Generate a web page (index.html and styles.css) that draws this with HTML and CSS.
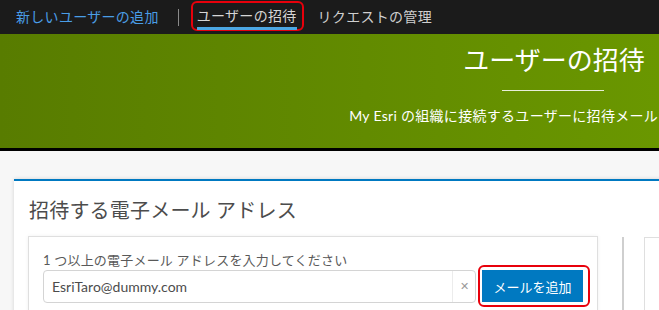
FILE: index.html
```html
<!DOCTYPE html>
<html lang="ja">
<head>
    <meta charset="UTF-8">
    <meta name="viewport" content="width=device-width, initial-scale=1.0">
    <title>ユーザーの招待</title>
    <link rel="stylesheet" href="styles.css">
</head>
<body>
    <nav class="topnav">
        <a href="#" class="nav-link nav-link-add">新しいユーザーの追加</a>
        <span class="nav-sep"></span>
        <span class="highlight highlight-nav">
            <a href="#" class="nav-link nav-link-active">ユーザーの招待</a>
        </span>
        <a href="#" class="nav-link">リクエストの管理</a>
    </nav>

    <header class="banner">
        <div class="banner-inner">
            <h1 class="banner-title">ユーザーの招待</h1>
            <div class="banner-rule"></div>
            <p class="banner-text">My Esri の組織に接続するユーザーに招待メールを送信します。</p>
        </div>
    </header>

    <main class="page">
        <section class="card">
            <h2 class="card-title">招待する電子メール アドレス</h2>

            <div class="card-body">
                <div class="email-box">
                    <label class="email-label" for="email-input">1 つ以上の電子メール アドレスを入力してください</label>
                    <div class="email-row">
                        <div class="input-wrap">
                            <input type="text" id="email-input" class="email-input" value="EsriTaro@dummy.com">
                            <span class="clear-button">&#x2715;</span>
                        </div>
                        <span class="highlight highlight-button">
                            <button class="add-button">メールを追加</button>
                        </span>
                    </div>
                </div>

                <div class="divider"></div>

                <div class="side-box"></div>
            </div>
        </section>
    </main>
</body>
</html>
```

FILE: styles.css
```css
html, body {
    margin: 0;
    overflow: hidden;
}

body {
    font-family: "Lato", "Noto Sans CJK JP", sans-serif;
    background-color: #f7f7f7;
    width: 659px;
    height: 310px;
}

/* Nawigacja */

.topnav {
    display: flex;
    align-items: center;
    height: 34px;
    padding-left: 16px;
    background-color: #1b1b1b;
    box-sizing: border-box;
}

.nav-link {
    font-size: 14px;
    letter-spacing: 0.3px;
    line-height: 20px;
    color: #cfcfcf;
    text-decoration: none;
    white-space: nowrap;
}

.nav-link-add {
    color: #4a9de6;
}

.nav-sep {
    width: 1px;
    height: 17px;
    margin: 0 12px 0 19px;
    background-color: #8a8a8a;
}

.highlight {
    display: inline-flex;
    align-items: center;
    border: 2px solid #e8000b;
    border-radius: 6px;
    box-sizing: border-box;
}

.highlight-nav {
    height: 30px;
    margin-top: -2px;
    padding: 4px 5px 0 4px;
    margin-right: 14px;
}

.nav-link-active {
    color: #d6d6d6;
    border-bottom: 3px solid #4ca7e3;
    padding-bottom: 1px;
}

/* Baner */

.banner {
    height: 117px;
    background: linear-gradient(to right, #587c00, #6a9700);
    border-bottom: 3px solid #000;
    box-sizing: border-box;
    overflow: hidden;
}

.banner-inner {
    width: 430px;
    margin-left: 338px;
    padding-top: 11px;
    text-align: center;
    color: #fff;
}

.banner-title {
    margin: 0;
    font-size: 26px;
    font-weight: normal;
    line-height: 30px;
    padding-left: 2px;
}

.banner-rule {
    width: 102px;
    height: 1px;
    margin: 15px auto 0;
    background-color: #e8eed8;
}

.banner-text {
    margin: 15px 0 0;
    font-size: 14px;
    letter-spacing: 0.3px;
    line-height: 20px;
    white-space: nowrap;
}

/* Karta */

.page {
    padding: 28px 0 0 14px;
}

.card {
    width: 720px;
    height: 200px;
    background-color: #fff;
    border-top: 2px solid #0079c1;
    box-shadow: 0px 0px 4px 0px rgba(0, 0, 0, 0.15);
    padding: 15px 0 0 14px;
    box-sizing: border-box;
}

.card-title {
    margin: 0 0 12px 1px;
    font-size: 20px;
    letter-spacing: 0.2px;
    font-weight: normal;
    line-height: 28px;
    color: #4c4c4c;
}

.card-body {
    display: flex;
    align-items: flex-start;
}

.email-box {
    width: 570px;
    height: 100px;
    border: 1px solid #dfdfdf;
    padding: 14px 0 0 14px;
    box-sizing: border-box;
    box-shadow: 0px 0px 4px 0px rgba(0, 0, 0, 0.06);
}

.email-label {
    display: block;
    font-size: 13px;
    letter-spacing: 0.2px;
    line-height: 18px;
    color: #595959;
    white-space: nowrap;
}

.email-row {
    display: flex;
    align-items: center;
    margin-top: -4px;
}

.input-wrap {
    display: flex;
    width: 433px;
    height: 33px;
    border: 1px solid #d4d4d4;
    border-radius: 4px;
    box-sizing: border-box;
}

.email-input {
    flex: 1;
    border: none;
    outline: none;
    padding: 0 8px;
    font-family: "Lato", "Noto Sans CJK JP", sans-serif;
    font-size: 14px;
    color: #4c4c4c;
    background: transparent;
}

.clear-button {
    width: 22px;
    display: flex;
    align-items: center;
    justify-content: center;
    border-left: 1px solid #ececec;
    color: #9a9a9a;
    font-size: 11px;
}

.highlight-button {
    height: 42px;
    padding: 0 5px 0 2px;
    margin-left: 2px;
}

.add-button {
    width: 101px;
    height: 32px;
    border: none;
    background-color: #0079c1;
    color: #fff;
    font-family: "Lato", "Noto Sans CJK JP", sans-serif;
    font-size: 13px;
    padding: 0;
    cursor: pointer;
}

.divider {
    width: 2px;
    height: 80px;
    margin: 1px 0 0 24px;
    background-color: #cfcfcf;
}

.side-box {
    width: 60px;
    height: 80px;
    margin: 1px 0 0 20px;
    border: 1px solid #dfdfdf;
}
```
